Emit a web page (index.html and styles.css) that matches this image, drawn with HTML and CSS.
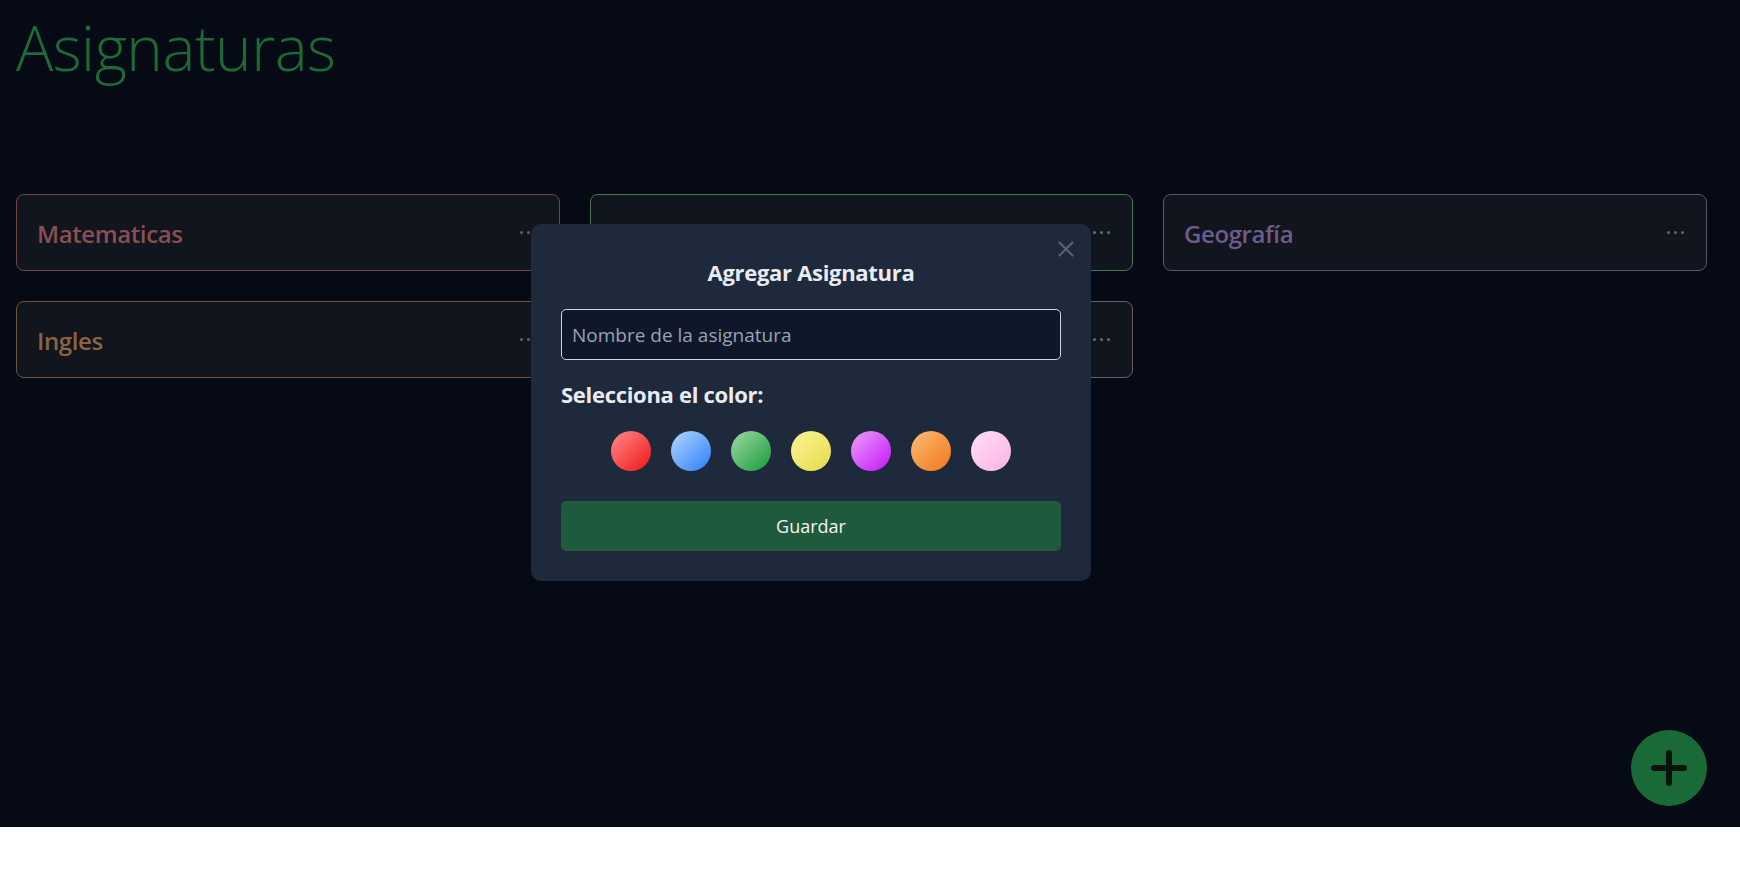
FILE: index.html
```html
<!DOCTYPE html>
<html lang="es">
<head>
<meta charset="utf-8">
<title>Asignaturas</title>
<link rel="stylesheet" href="styles.css">
</head>
<body>
<div class="app">
  <h1 class="page-title">Asignaturas</h1>

  <div class="subject-grid">
    <div class="card card--red">
      <span class="card-name">Matematicas</span>
      <button class="card-menu" aria-label="Opciones"><i></i><i></i><i></i></button>
    </div>
    <div class="card card--green">
      <span class="card-name">Ciencias</span>
      <button class="card-menu" aria-label="Opciones"><i></i><i></i><i></i></button>
    </div>
    <div class="card card--purple">
      <span class="card-name">Geografía</span>
      <button class="card-menu" aria-label="Opciones"><i></i><i></i><i></i></button>
    </div>
    <div class="card card--orange">
      <span class="card-name">Ingles</span>
      <button class="card-menu" aria-label="Opciones"><i></i><i></i><i></i></button>
    </div>
    <div class="card card--pink">
      <span class="card-name">Música</span>
      <button class="card-menu" aria-label="Opciones"><i></i><i></i><i></i></button>
    </div>
  </div>

  <div class="modal">
    <button class="modal-close" aria-label="Cerrar">
      <svg viewBox="0 0 16 16" width="16" height="16"><path d="M1.5 1.5 L14.5 14.5 M14.5 1.5 L1.5 14.5" stroke="currentColor" stroke-width="2.2" stroke-linecap="round" fill="none"/></svg>
    </button>
    <h2 class="modal-title">Agregar Asignatura</h2>
    <input class="modal-input" type="text" placeholder="Nombre de la asignatura">
    <p class="modal-label">Selecciona el color:</p>
    <div class="swatches">
      <span class="swatch swatch--red"></span>
      <span class="swatch swatch--blue"></span>
      <span class="swatch swatch--green"></span>
      <span class="swatch swatch--yellow"></span>
      <span class="swatch swatch--purple"></span>
      <span class="swatch swatch--orange"></span>
      <span class="swatch swatch--pink"></span>
    </div>
    <button class="save-btn">Guardar</button>
  </div>

  <button class="fab" aria-label="Agregar">
    <svg viewBox="0 0 36 36" width="36" height="36"><path d="M18 3 V33 M3 18 H33" stroke="currentColor" stroke-width="6" stroke-linecap="round" fill="none"/></svg>
  </button>
</div>
</body>
</html>
```

FILE: styles.css
```css
* {
  box-sizing: border-box;
}

html, body {
  margin: 0;
  padding: 0;
  background: #ffffff;
}

body {
  font-family: "Open Sans", "Noto Sans", sans-serif;
}

.app {
  position: relative;
  height: 827px;
  background: #060a14;
  overflow: hidden;
}

.page-title {
  margin: 0;
  padding: 7px 0 0 16px;
  font-size: 62px;
  line-height: 80px;
  font-weight: 300;
  color: #1c6a38;
  letter-spacing: -0.5px;
}

.subject-grid {
  display: grid;
  grid-template-columns: repeat(3, 543.5px);
  column-gap: 30px;
  row-gap: 30px;
  margin-top: 107px;
  padding-left: 16px;
}

.card {
  height: 77px;
  display: flex;
  align-items: center;
  justify-content: space-between;
  padding: 0 22px 0 20px;
  background: #11151d;
  border: 1px solid var(--card-border);
  border-radius: 8px;
}

.card-name {
  margin-top: 2px;
  font-size: 24px;
  font-weight: 600;
  color: var(--card-text);
  letter-spacing: -0.4px;
}

.card-menu {
  display: flex;
  gap: 4px;
  padding: 0;
  border: 0;
  background: transparent;
}

.card-menu i {
  width: 3px;
  height: 3px;
  border-radius: 50%;
  background: var(--card-dots);
}

.card--red {
  --card-border: #6f4549;
  --card-text: #8a4e53;
  --card-dots: #7a5559;
}
.card--green {
  --card-border: #47754f;
  --card-text: #4f8a5a;
  --card-dots: #4d7f58;
}
.card--purple {
  --card-border: #5a566b;
  --card-text: #6f5b8b;
  --card-dots: #666575;
}
.card--orange {
  --card-border: #6f543a;
  --card-text: #8c6443;
  --card-dots: #75614c;
}
.card--pink {
  --card-border: #6e5b69;
  --card-text: #8a6c80;
  --card-dots: #6f6672;
}

.modal {
  position: absolute;
  left: 531px;
  top: 224px;
  width: 560px;
  padding: 30px;
  background: #1e293b;
  border-radius: 10px;
  display: flex;
  flex-direction: column;
}

.modal-close {
  position: absolute;
  top: 17px;
  right: 17px;
  width: 16px;
  height: 16px;
  padding: 0;
  border: 0;
  background: transparent;
  color: #566173;
  display: flex;
}

.modal-title {
  margin: 4px 0 0;
  font-size: 22px;
  line-height: 28px;
  font-weight: 700;
  text-align: center;
  color: #e8ecf2;
  letter-spacing: -0.3px;
}

.modal-input {
  margin-top: 23px;
  height: 51px;
  width: 100%;
  padding: 0 10px;
  font-family: inherit;
  font-size: 19px;
  color: #e5e7eb;
  background: #0f172a;
  border: 1px solid #cfd5df;
  border-radius: 5px;
  outline: none;
}

.modal-input::placeholder {
  color: #9aa3b2;
}

.modal-label {
  margin: 20px 0 0;
  font-size: 22px;
  line-height: 28px;
  font-weight: 700;
  color: #e8ecf2;
  letter-spacing: -0.3px;
}

.swatches {
  margin-top: 23px;
  display: flex;
  justify-content: center;
  gap: 20px;
}

.swatch {
  width: 40px;
  height: 40px;
  border-radius: 50%;
}

.swatch--red { background: linear-gradient(135deg, #ff8a8a, #f01616); }
.swatch--blue { background: linear-gradient(135deg, #b4d8ff, #2a7dfb); }
.swatch--green { background: linear-gradient(135deg, #a0d8a8, #179c35); }
.swatch--yellow { background: linear-gradient(135deg, #fbf59a, #e6da45); }
.swatch--purple { background: linear-gradient(135deg, #eea0f6, #c414fb); }
.swatch--orange { background: linear-gradient(135deg, #fdbd72, #f0761e); }
.swatch--pink { background: linear-gradient(135deg, #ffe0f3, #fbb2e6); }

.save-btn {
  margin-top: 30px;
  height: 50px;
  width: 100%;
  font-family: inherit;
  font-size: 18px;
  color: #f3f4f6;
  background: #1f5a3d;
  border: 0;
  border-radius: 5px;
}

.fab {
  position: absolute;
  right: 33px;
  bottom: 21px;
  width: 76px;
  height: 76px;
  border-radius: 50%;
  border: 0;
  padding: 0;
  background: #1a6a37;
  color: #08130d;
  display: flex;
  align-items: center;
  justify-content: center;
}
```
